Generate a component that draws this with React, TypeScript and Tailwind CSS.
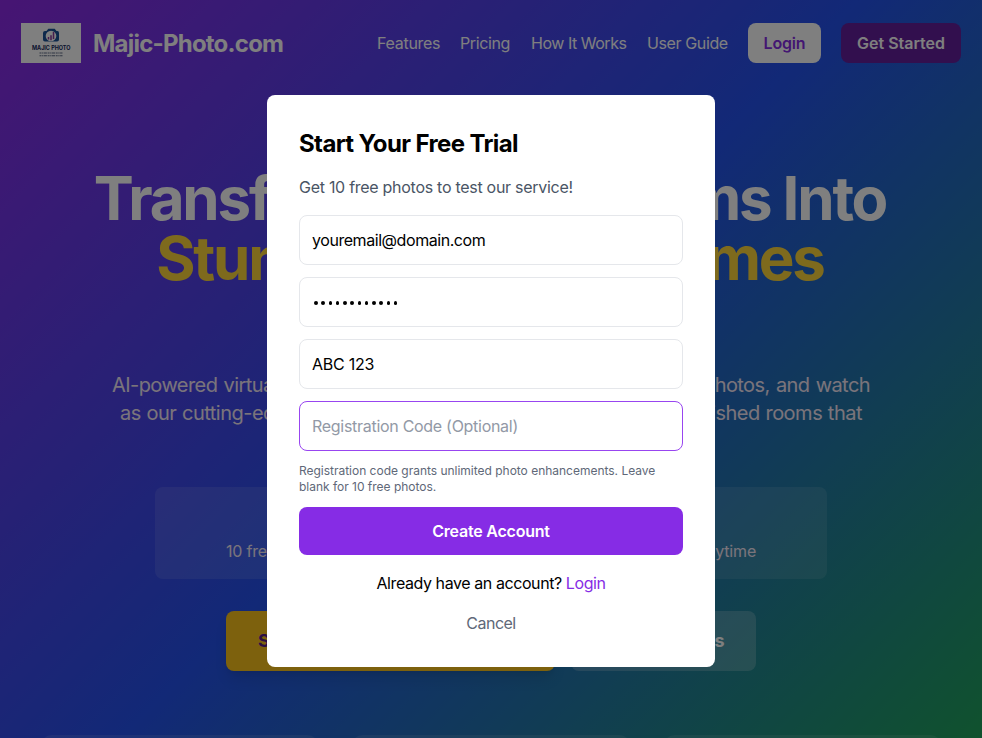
import React from "react";

const font = "font-['Inter','Liberation_Sans',sans-serif]";

function Logo() {
  return (
    <svg width="60" height="40" viewBox="0 0 60 40" className="block shrink-0">
      <rect width="60" height="40" fill="#ffffff" />
      <path d="M22 10 q0-2 2-2 h1.5 l1.8-2.2 h6.4 l1.8 2.2 h1 q1.500 0 1.500 2 v6.500 q0 2-2 2 h-12 q-2 0-2-2z" fill="#1b5298" />
      <circle cx="30" cy="13" r="5.300" fill="#ffffff" />
      <path d="M27.500 16.500v-2.500M30 17.300v-5M32.500 16v-7" stroke="#8a3a9c" strokeWidth="1.500" />
      <text x="11" y="27.300" fontSize="6.400" fontWeight="700" fill="#14295c" textLength="38.500" lengthAdjust="spacingAndGlyphs" fontFamily="Inter, sans-serif">MAJIC PHOTO</text>
      <path d="M18.500 30h23M18.500 32.700h23" stroke="#5f6b85" strokeWidth="1.100" strokeDasharray="2 .6 1.300 .5 3 .7" />
    </svg>
  );
}

function Header() {
  return (
    <header className="flex h-[86px] items-center justify-between px-[21px] text-white">
      <div className="flex items-center gap-3">
        <Logo />
        <span className="pt-0.5 text-2xl font-bold tracking-[-0.78px]">Majic-Photo.com</span>
      </div>
      <nav className="flex items-center gap-5 whitespace-nowrap tracking-[-0.38px]">
        <a className="w-[63px] tracking-[-0.28px]">Features</a>
        <a className="w-[51px]">Pricing</a>
        <a className="w-24 tracking-[-0.47px]">How It Works</a>
        <a className="w-[81px]">User Guide</a>
        <button className="h-10 w-[73px] rounded-lg bg-white font-semibold tracking-[-0.2px] text-[#862ce5]">Login</button>
        <button className="h-10 w-[120px] rounded-lg bg-[#641e9c] font-semibold tracking-[-0.02px]">Get Started</button>
      </nav>
    </header>
  );
}

function Hero() {
  return (
    <main className="flex flex-col items-center whitespace-nowrap text-center text-white">
      <h1 className="mt-[82px] mr-[2px] text-6xl/[60px] font-bold tracking-[-2.18px]">
        <span className="block">Transform Empty Rooms Into</span>
        <span className="block text-[#fcd53a] [word-spacing:10px]">Stunning Dream Homes</span>
      </h1>
      <div className="mt-[83px] flex flex-col items-center text-xl/7 text-[#f5e9f7]">
        <p className="h-7 w-[758px] whitespace-normal tracking-[-0.57px] [text-align-last:justify]">AI-powered virtual staging for real estate. Upload all empty room photos, and watch</p>
        <p className="h-7 w-[742px] whitespace-normal tracking-[-0.5px] [text-align-last:justify]">as our cutting-edge AI transforms your space into beautifully furnished rooms that</p>
      </div>
      <div className="mt-[60px] flex h-[92px] w-2xl items-end justify-center rounded-lg bg-white/10 pb-4 text-[#f5e9f7]">
        <p className="tracking-[-0.16px]">10 free photos to get started • No credit card required • Cancel anytime</p>
      </div>
      <div className="mt-8 flex gap-4 text-lg font-bold">
        <button className="h-[60px] w-[329px] rounded-lg bg-[#fac31a] px-8 text-left text-[#581c87] shadow-lg">Start Free Trial - 10 Free Photos</button>
        <button className="h-[60px] w-[185px] rounded-lg bg-white/20 px-8 text-right tracking-[-0.5px]">See Examples</button>
      </div>
      <div className="mt-16 grid w-[902px] grid-cols-3 gap-8">
        <div className="h-40 rounded-xl bg-white/10" />
        <div className="h-40 rounded-xl bg-white/10" />
        <div className="h-40 rounded-xl bg-white/10" />
      </div>
    </main>
  );
}

function SignUpModal() {
  const field = "h-[50px] w-full rounded-lg border border-gray-200 px-3 outline-none";
  return (
    <div className="absolute inset-0 flex items-start justify-center bg-black/50 pt-[95px]">
      <form className="flex h-[572px] w-md flex-col rounded-lg bg-white p-8 text-black tracking-[-0.26px]">
        <h2 className="mt-px text-2xl font-bold tracking-[-0.62px]">Start Your Free Trial</h2>
        <p className="mt-[15px] tracking-[-0.28px] text-[#4a5565]">Get 10 free photos to test our service!</p>
        <div className="mt-4 flex flex-col gap-3">
          <input className={`${field} tracking-[-0.44px]`} defaultValue="youremail@domain.com" />
          <div className="flex h-[50px] items-center gap-[3.75px] rounded-lg border border-gray-200 pt-0.5 pl-[14px]">
            {Array.from({ length: 12 }, (_, i) => (
              <span key={i} className="size-[3.5px] rounded-full bg-black" />
            ))}
          </div>
          <input className={field} defaultValue="ABC 123" />
          <input className="h-[50px] w-full rounded-lg border border-[#9845f0] px-3 tracking-[-0.29px] outline-none placeholder:text-[#9299a6]" placeholder="Registration Code (Optional)" />
        </div>
        <p className="mt-3 whitespace-nowrap text-xs tracking-[-0.015px] text-[#606878]">
          Registration code grants unlimited photo enhancements. Leave
          <br />
          blank for 10 free photos.
        </p>
        <button type="button" className="mt-3 h-12 shrink-0 rounded-lg bg-[#862ce5] font-semibold tracking-[-0.22px] text-white">Create Account</button>
        <p className="mt-4 text-center tracking-[-0.42px]">
          Already have an account? <a className="text-[#862ce5]">Login</a>
        </p>
        <button type="button" className="mt-4 tracking-[-0.5px] text-[#606878]">Cancel</button>
      </form>
    </div>
  );
}

export default function App() {
  return (
    <div className={`relative h-[738px] w-[982px] overflow-hidden bg-[linear-gradient(135deg,#8e2ae6_0%,#2452ee_50%,#20a45c_100%)] text-base ${font}`}>
      <Header />
      <Hero />
      <SignUpModal />
    </div>
  );
}
